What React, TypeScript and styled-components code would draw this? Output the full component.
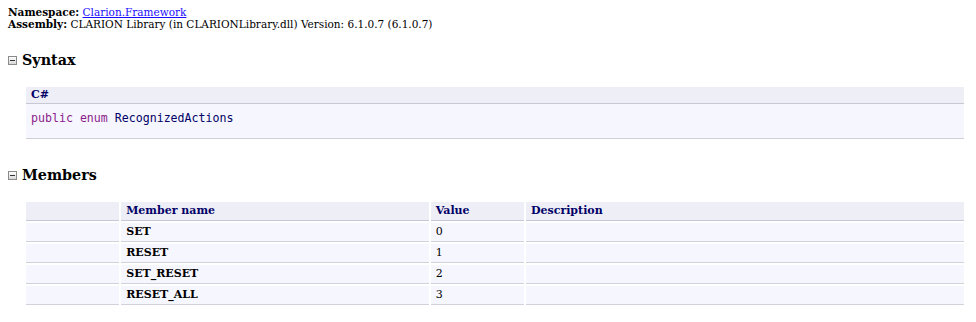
import { Fragment } from "react";
import styled, { createGlobalStyle } from "styled-components";

const GlobalStyle = createGlobalStyle`
    body {
        margin: 0;
        background: #fff;
        font-family: "DejaVu Serif", serif;
        color: #000;
    }
`;

const Page = styled.div`
    padding: 6px 12px 0 8px;
`;

const InfoLine = styled.div`
    font-size: 10.5px;
    line-height: 12px;
`;

const Label = styled.b`
    font-weight: bold;
`;

const Link = styled.a`
    color: #1a0dff;
    text-decoration: underline;
`;

const SectionTitle = styled.h1<{ $top: number }>`
    margin: ${(p) => p.$top}px 0 0;
    display: flex;
    align-items: center;
    gap: 5px;
    font-size: 14.3px;
    line-height: 20px;
    font-weight: bold;
`;

const Toggle = styled.span`
    width: 7px;
    height: 7px;
    border: 1px solid #8a8a8a;
    background: linear-gradient(#ffffff, #d8d8d8);
    position: relative;
    flex-shrink: 0;

    &::after {
        content: "";
        position: absolute;
        left: 1px;
        right: 1px;
        top: 3px;
        height: 1px;
        background: #333;
    }
`;

const SectionBody = styled.div<{ $top: number }>`
    margin: ${(p) => p.$top}px 0 0 18px;
`;

const CodeHead = styled.div`
    background: #eeeef6;
    border-bottom: 1px solid #c8c8d4;
    padding: 0 5px;
    height: 16px;
    line-height: 16px;
    font-size: 11px;
    font-weight: bold;
    color: #000066;
`;

const CodeBody = styled.pre`
    margin: 0;
    background: #f6f6fe;
    border-bottom: 1px solid #cfcfd6;
    height: 34px;
    padding: 0 5px;
    font-family: "DejaVu Sans Mono", monospace;
    font-size: 11.6px;
    line-height: 28px;
    color: #000066;
`;

const Keyword = styled.span`
    color: #8b1c8b;
`;

const Table = styled.div`
    display: grid;
    grid-template-columns: 10fr 33fr 10fr 47fr;
    gap: 2px;
`;

const Cell = styled.div<{ $head?: boolean; $bold?: boolean }>`
    background: ${(p) => (p.$head ? "#eeeef6" : "#f6f6fe")};
    border-bottom: 1px solid ${(p) => (p.$head ? "#c6c6d8" : "#d2d2da")};
    height: 18px;
    line-height: 18px;
    padding: 0 5px;
    font-size: 11px;
    font-weight: ${(p) => (p.$head || p.$bold ? "bold" : "normal")};
    color: ${(p) => (p.$head ? "#000066" : "#000")};
    white-space: nowrap;
`;

const members = [
    { name: "SET", value: "0" },
    { name: "RESET", value: "1" },
    { name: "SET_RESET", value: "2" },
    { name: "RESET_ALL", value: "3" },
];

export default function App() {
    return (
        <>
            <GlobalStyle />
            <Page>
                <InfoLine>
                    <Label>Namespace:</Label> <Link href="#">Clarion.Framework</Link>
                </InfoLine>
                <InfoLine>
                    <Label>Assembly:</Label> CLARION Library (in CLARIONLibrary.dll) Version: 6.1.0.7
                    (6.1.0.7)
                </InfoLine>

                <SectionTitle $top={20}>
                    <Toggle />
                    Syntax
                </SectionTitle>
                <SectionBody $top={17}>
                    <CodeHead>C#</CodeHead>
                    <CodeBody>
                        <Keyword>public</Keyword> <Keyword>enum</Keyword> RecognizedActions
                    </CodeBody>
                </SectionBody>

                <SectionTitle $top={26}>
                    <Toggle />
                    Members
                </SectionTitle>
                <SectionBody $top={17}>
                    <Table>
                        <Cell $head />
                        <Cell $head>Member name</Cell>
                        <Cell $head>Value</Cell>
                        <Cell $head>Description</Cell>
                        {members.map((m) => (
                            <Fragment key={m.name}>
                                <Cell />
                                <Cell $bold>{m.name}</Cell>
                                <Cell>{m.value}</Cell>
                                <Cell />
                            </Fragment>
                        ))}
                    </Table>
                </SectionBody>
            </Page>
        </>
    );
}
